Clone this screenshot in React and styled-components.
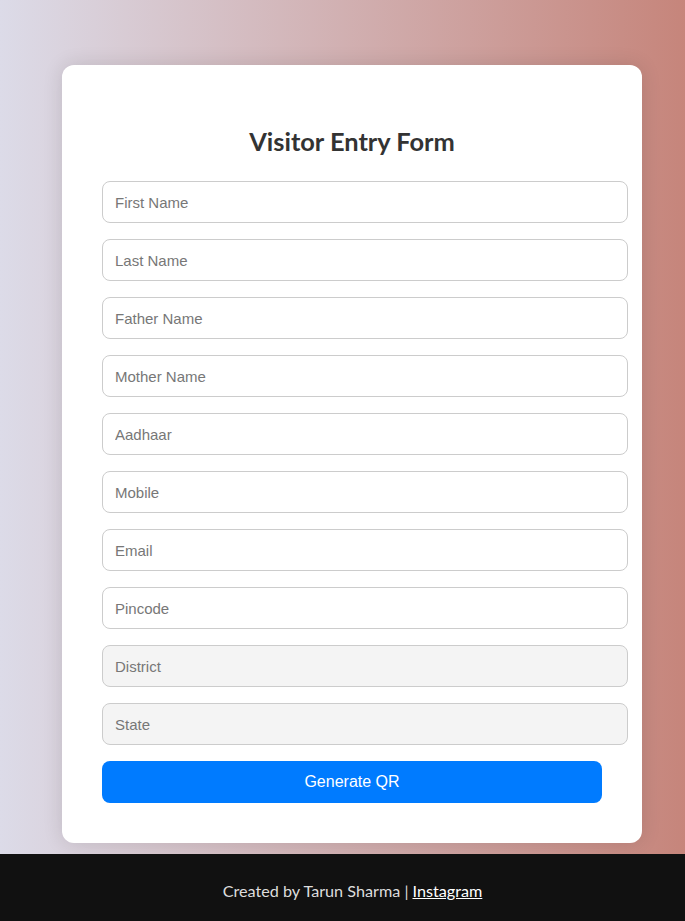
import React from 'react'
import styled, { createGlobalStyle } from 'styled-components'

const GlobalStyle = createGlobalStyle`
  * {
    box-sizing: content-box;
  }
  html, body {
    margin: 0;
    padding: 0;
  }
  body {
    min-height: 100vh;
    background: linear-gradient(to right, #dcdbe8, #c6857b);
    font-family: "Segoe UI", Lato, "Noto Sans", sans-serif;
  }
`

const Page = styled.div`
  display: flex;
  flex-direction: column;
  min-height: 100vh;
`

const Main = styled.main`
  flex: 1;
  padding: 65px 43px 11px 62px;
`

const Card = styled.div`
  background: #fff;
  border-radius: 12px;
  padding: 40px;
  box-shadow: 0 0 20px rgba(0, 0, 0, 0.12);
`

const Title = styled.h2`
  margin: 22px 0 25px;
  text-align: center;
  font-size: 25.4px;
  font-weight: 700;
  color: #333;
  line-height: 29px;
`

const Form = styled.form`
  display: flex;
  flex-direction: column;
  gap: 16px;
`

const Input = styled.input`
  display: block;
  width: 100%;
  height: 40px;
  padding: 0 12px;
  border: 1px solid #ccc;
  border-radius: 8px;
  font-family: "Liberation Sans", Arial, sans-serif;
  font-size: 15px;
  color: #333;
  background: ${p => (p.readOnly ? '#f4f4f4' : '#fff')};
  outline: none;

  &::placeholder {
    color: #777;
  }
`

const Button = styled.button`
  width: 100%;
  height: 42px;
  padding: 0;
  border: none;
  border-radius: 8px;
  background: #007bff;
  color: #fff;
  font-family: "Liberation Sans", Arial, sans-serif;
  font-size: 16px;
  cursor: pointer;
`

const Footer = styled.footer`
  height: 67px;
  background: #111;
  color: #ddd;
  display: flex;
  align-items: center;
  justify-content: center;
  font-size: 16.2px;
  padding: 6px 0 0 20px;
  box-sizing: border-box;
`

const Link = styled.a`
  color: #fff;
  text-decoration: underline;
  margin-left: 4px;
`

const fields = [
  { name: 'firstName', label: 'First Name' },
  { name: 'lastName', label: 'Last Name' },
  { name: 'fatherName', label: 'Father Name' },
  { name: 'motherName', label: 'Mother Name' },
  { name: 'aadhaar', label: 'Aadhaar' },
  { name: 'mobile', label: 'Mobile' },
  { name: 'email', label: 'Email' },
  { name: 'pincode', label: 'Pincode' },
  { name: 'district', label: 'District', readOnly: true },
  { name: 'state', label: 'State', readOnly: true },
]

export default function App() {
  return (
    <Page>
      <GlobalStyle />
      <Main>
        <Card>
          <Title>Visitor Entry Form</Title>
          <Form onSubmit={e => e.preventDefault()}>
            {fields.map(f => (
              <Input key={f.name} name={f.name} placeholder={f.label} readOnly={f.readOnly} />
            ))}
            <Button type="submit">Generate QR</Button>
          </Form>
        </Card>
      </Main>
      <Footer>
        Created by Tarun Sharma |<Link href="#">Instagram</Link>
      </Footer>
    </Page>
  )
}
